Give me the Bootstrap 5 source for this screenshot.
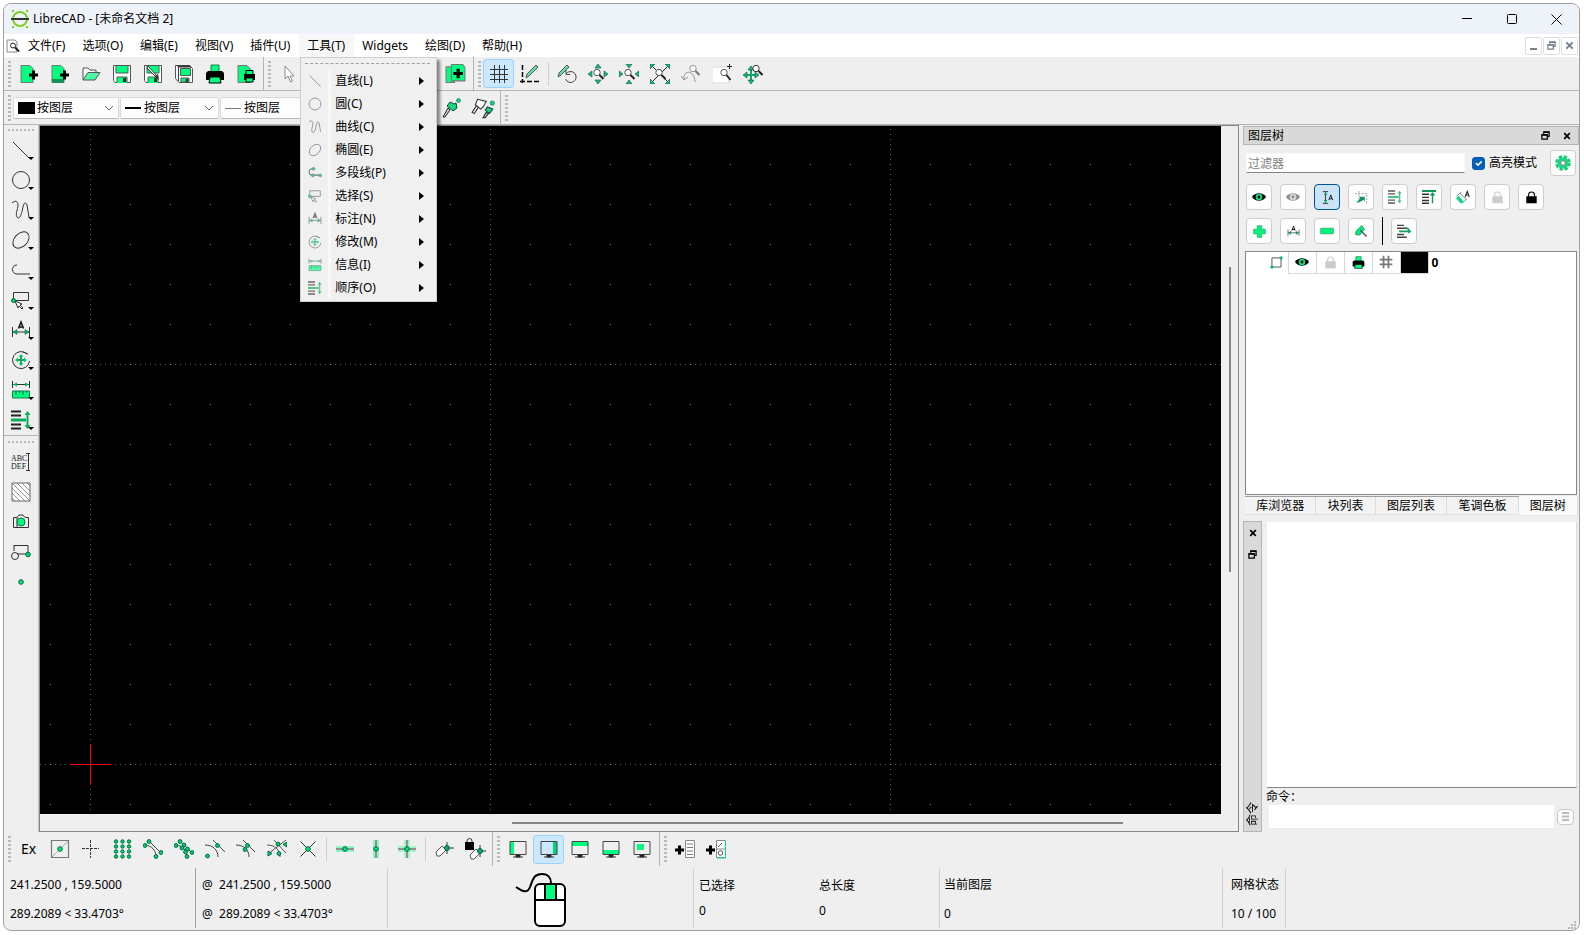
<!DOCTYPE html>
<html lang="zh-CN">
<head>
<meta charset="utf-8">
<meta name="viewport" content="width=device-width, initial-scale=1">
<title>LibreCAD - [未命名文档 2]</title>
<link rel="stylesheet" href="https://cdn.jsdelivr.net/npm/bootstrap@5.3.0/dist/css/bootstrap.min.css">
<script src="https://cdn.jsdelivr.net/npm/bootstrap@5.3.0/dist/js/bootstrap.bundle.min.js"></script>
<style>
  :root { --face: #efefef; --line: #b4b4b4; --frame: #828790; --go: #00ff7f; }
  body { font: 12px/16px "Noto Sans", "Noto Sans CJK SC", sans-serif; color: #000; background: #fff; padding: 3px 4px 4px 3px; }
  svg { display: block; flex: none; }
  button { color: inherit; }
  .app-window { background: var(--face); border: 1px solid #a0a0a0; border-radius: 8px; overflow: hidden; }
  .title-strip { background: #eef3fa; height: 30px; padding-left: 7px; }
  .caption-btn { width: 45px; height: 30px; }
  .plain-btn { border: 0; background: none; padding: 0; display: flex; align-items: center; justify-content: center; }
  .menu-strip { background: #fff; height: 23px; padding-left: 2px; }
  .menu-strip .nav-link { color: #000; padding: 4px 9px 3px 8px; line-height: 16px; }
  .menu-strip .nav-link.open { background: #f7f7f7; }
  .mdi-group { gap: 1px; margin-right: 1px; color: #75808c; }
  .mdi-btn { width: 17px; height: 18px; border: 1px solid #dedede; border-radius: 2px; background: #fff; }

  .tool-row { height: 34px; border-bottom: 1px solid var(--line); }
  .tool-group { display: flex; align-items: center; padding: 0 2px 0 4px; border-right: 1px solid var(--line); }
  .tool-group.last { border-right: 0; }
  .grip { width: 3px; height: 26px; margin-right: 2px; background: linear-gradient(#b8b8b8, #b8b8b8) 0 0 / 2px 4px; 
          -webkit-mask: repeating-linear-gradient(#000 0 2px, transparent 2px 4px); mask: repeating-linear-gradient(#000 0 2px, transparent 2px 4px); }
  .grip-h { width: 27px; height: 2px; -webkit-mask: repeating-linear-gradient(90deg, #000 0 2px, transparent 2px 4px); mask: repeating-linear-gradient(90deg, #000 0 2px, transparent 2px 4px); background: #b8b8b8; }
  .tool-btn { width: 31px; height: 29px; border: 1px solid transparent; border-radius: 3px; background: none; padding: 0; display: flex; align-items: center; justify-content: center; flex: none; }
  .tool-btn.on { background: #cce8ff; border-color: #99d1ff; }
  .tool-btn:hover { background: #e0f0fc; }
  .tool-gap { width: 6px; height: 24px; background: linear-gradient(#cfcfcf, #cfcfcf) 3px 0 / 1px 100% no-repeat; flex: none; }
  .select-group { width: 210px; }
  .pen-group { width: 497px; }
  .pen-combo { display: flex; align-items: center; height: 22px; margin-right: 1px; padding: 0 4px; border: 1px solid #d8d8d8; border-bottom-color: #b8b8b8; border-radius: 2px; background: #fdfdfd; width: 99px; }
  .pen-combo.wide { width: 106px; }
  .pen-combo select { appearance: none; border: 0; background: none; padding: 0 0 0 2px; flex: 1; min-width: 0; font: inherit; color: inherit; }
  .ex-label { font-size: 14px; }

  .tools-menu { position: absolute; top: 23px; left: 1px; width: 137px; min-width: 0; padding: 5px 2px 2px 4px; font-size: 12px; background: #f0f0f0; border: 1px solid #fff; outline: 1px solid #cfcfcf; outline-offset: -1px; border-radius: 0; box-shadow: 3px 3px 3px #0007; }
  .tear-line { border-top: 1px dashed #a0a0a0; margin: 0 4px 5px 0; }
  .tools-menu .dropdown-item { display: flex; align-items: center; height: 23px; padding: 0 10px 0 3px; color: #000; }
  .menu-label { border-left: 3px solid #f8f8f8; margin-left: 6px; padding-left: 4px; flex: 1; line-height: 23px; }
  .menu-icon { opacity: .65; }

  .side-bar { width: 35px; border-right: 1px solid #c4c4c4; }
  .side-bar .tool-btn { height: 30px; width: 34px; position: relative; }
  .side-bar .arrow::after { content: ""; position: absolute; right: 3px; bottom: 4px; border: 3px solid transparent; border-top-color: #000; border-bottom: 0; }
  .side-line { width: 100%; border-top: 1px solid var(--line); margin: 0 0 5px; }
  .view-frame { border: 1px solid var(--frame); min-width: 0; }
  .drawing { background: #000; min-width: 0; min-height: 0; position: relative; overflow: hidden; }
  .drawing svg { position: absolute; inset: 0; }
  .v-scroll { width: 17px; padding: 141px 0 242px; }
  .v-scroll div { width: 2px; height: 100%; background: #868686; margin-left: 8px; }
  .h-scroll { height: 17px; padding: 8px 0 0; }
  .h-scroll div { height: 2px; background: #868686; margin-left: 39.4%; width: 51%; }

  .dock-col { width: 336px; margin-left: 4px; padding-top: 1px; }
  .dock-title { height: 19px; background: #d9d9d9; border: 1px solid #b5b5b5; padding: 0 7px 0 4px; line-height: 17px; }
  .dock-title .gap-btn { margin-left: 13px; }
  .dock-tools { padding: 5px 3px 6px; }
  .filter-box { width: 219px; height: 20px; border: 1px solid #f8f8f8; border-bottom: 1px solid #868686; padding: 0 1px; background: #fff; }
  .filter-box::placeholder { color: #808080; }
  .mode-check { width: 13px; height: 13px; margin: 0 4px 0 7px; border-radius: 3px; }
  .mode-check:checked { background-color: #005fb8; border-color: #005fb8; }
  .layer-btn { width: 26px; height: 26px; border: 1px solid #cdcdcd; border-radius: 4px; background: #fdfdfd; padding: 0; display: flex; align-items: center; justify-content: center; }
  .layer-btn.on { background: #cce4f7; border-color: #005499; }
  .button-row { gap: 8px; margin-top: 8px; }
  .button-row.lined { margin-top: 7px; }
  .button-line { width: 1px; height: 28px; background: #000; }
  .off { color: #ccc; }
  .layer-list { height: 244px; margin: 0 2px; background: #fff; border: 1px solid var(--frame); }
  .layer-list table { margin-left: 24px; border-collapse: collapse; }
  .layer-list td { padding: 0; height: 21px; width: 28px; border: 1px solid #d8d8d8; border-top: 0; }
  .layer-list td svg { margin: auto; }
  .layer-list td.bare { border-width: 0; padding-left: 3px; }
  .layer-list td.node { border-left: 0; border-bottom: 0; width: 18px; }
  .layer-list td.node svg { margin: 0; }
  .layer-list td.swatch { background: #000; }
  .dock-tabs { margin: 1px 1px 0 2px; border-top: 1px solid #a0a0a0; height: 20px; }
  .dock-tabs .nav-link { color: #000; background: #f3f3f3; border-right: 1px solid #dcdcdc; border-bottom: 1px solid #e2e2e2; border-radius: 0; height: 18px; padding: 0; line-height: 17px; text-align: center; flex: 1 1 auto; }
  .dock-tabs .nav-link.active { background: #fafafa; height: 20px; margin-top: -1px; line-height: 20px; }
  .command-dock { margin-top: 5px; }
  .command-rail { width: 19px; background: #d9d9d9; border: 1px solid #b5b5b5; padding: 7px 0 5px; gap: 13px; }
  .rail-text { writing-mode: vertical-rl; text-orientation: sideways; transform: rotate(180deg); line-height: 17px; }
  .command-log { margin: 1px 2px 0 5px; background: #fff; border: 0; border-right: 1px solid #dcdcdc; border-bottom: 1px solid #868686; resize: none; min-height: 60px; }
  .command-label { margin-left: 4px; line-height: 17px; }
  .command-input { height: 23px; border: 0; background: #fff; margin-left: 7px; min-width: 0; }
  .command-menu { width: 17px; height: 16px; border: 1px solid #c8c8c8; border-radius: 4px; background: #fdfdfd; margin: 0 5px 0 3px; }

  .bottom-row { height: 34px; }
  .status-strip { height: 64px; }
  .status-cell { margin: 2px 0; padding: 2px 6px; border-right: 1px solid #d0d0d0; line-height: 29px; white-space: pre; }
  .status-cell.dark { border-right-color: #a0a0a0; }
  .status-cell.tight { line-height: 25px; padding-top: 5px; padding-left: 5px; }
  .w-coord { width: 192px; } .w-mouse { width: 306px; } .w-sel { width: 246px; }
  .w-layer { width: 283px; padding-left: 4px; } .w-grid { width: 63px; padding-left: 8px; padding-right: 0; }
  .w-half { width: 120px; }
</style>
</head>
<body class="vh-100 overflow-hidden">

<svg width="0" height="0" class="position-absolute" aria-hidden="true">
  <defs>
    <symbol id="i-new" viewBox="0 0 20 20"><path d="M2 1.500h9l3 3v14H2z" fill="#00ff7f" stroke="#777"/><path d="M10 11h9M14.500 6.500v9" stroke="#000" stroke-width="3"/></symbol>
    <symbol id="i-newt" viewBox="0 0 20 20"><path d="M2 1.500h9l3 3v14H2z" fill="#00ff7f" stroke="#777"/><path d="M2 15h12v4H2z" fill="#16905a"/><path d="M10 11h9M14.500 6.500v9" stroke="#000" stroke-width="3"/></symbol>
    <symbol id="i-open" viewBox="0 0 20 20"><path d="M2 16V4h5l2 2h6v3" fill="#f4f4f4" stroke="#555"/><path d="M2 16 7 8.500h12L14 16z" fill="#4dfba4" stroke="#555"/></symbol>
    <symbol id="i-save" viewBox="0 0 20 20"><path d="M1.500 1.500h17v17H3l-1.500-2z" fill="#fff" stroke="#555"/><path d="M4 2h12v7H4zM5 13h10v6H5z" fill="#00ff7f"/><path d="M4 2v7h12V2M5 18v-5h10v5" fill="none" stroke="#555"/><path d="M11 14h3v4h-3z" fill="#333"/></symbol>
    <symbol id="i-saveas" viewBox="0 0 20 20"><use href="#i-save"/><path d="M5 2 15 13l-1 1L4 4z" fill="#fff" stroke="#333"/><path d="m12 12 4 4-1-6z" fill="#333"/></symbol>
    <symbol id="i-saveall" viewBox="0 0 20 20"><path d="M1.500 1.500h14l3 3v14H5l-3.500-4z" fill="#fff" stroke="#555"/><path d="M2 1.500h14l2 2H5z" fill="#333"/><path d="M6.500 4.500h10v7h-10zM7 14h8v4H7z" fill="#00ff7f" stroke="#555"/><path d="M4.500 3v14M12 15h2v3h-2z" stroke="#444" fill="#333"/></symbol>
    <symbol id="i-print" viewBox="0 0 20 20"><path d="M6 1h8v8H6z" fill="#00ff7f" stroke="#14804e"/><path d="M3 7h14l2 2v7H1V9z" fill="#000"/><path d="M5 13h10l1 6H4z" fill="#00ff7f" stroke="#000"/></symbol>
    <symbol id="i-preview" viewBox="0 0 20 20"><path d="M2 1.500h9l3 3v14H2z" fill="#00ff7f" stroke="#777"/><path d="M8 10h11v6H8z" fill="#000"/><path d="M10 6.500h7v4h-7zM10 14h7v4h-7z" fill="#00ff7f" stroke="#000"/></symbol>
    <symbol id="i-cursor" viewBox="0 0 20 20"><path d="M6 2v13l3-3 2.500 6 2-1-2.500-5h4z" fill="#fff" stroke="#888"/></symbol>
    <symbol id="i-paste" viewBox="0 0 20 20"><path d="M1 3.500h8v15H1z" fill="#00ff7f" stroke="#777"/><path d="M9 1.500h8l2 3V17H6V1.500z" fill="#00ff7f" stroke="#777"/><path d="M8 10h9M12.500 5.500v9" stroke="#000" stroke-width="3"/></symbol>
    <symbol id="i-grid" viewBox="0 0 20 20"><path d="M5.500 1v18M10.500 1v18M15.500 1v18M1 5.500h18M1 10.500h18M1 15.500h18" stroke="#333"/></symbol>
    <symbol id="i-draft" viewBox="0 0 20 20"><path d="M2.500 1v18M0 17.500h20" stroke="#000" stroke-width="1.500" stroke-dasharray="5 2"/><path d="m6 14 1-4 9-9 2 2-9 9z" fill="#5fe0a0" stroke="#555"/></symbol>
    <symbol id="i-redraw" viewBox="0 0 20 20"><path d="m1 13 1-4L10 1l2 2-8 8z" fill="#5fe0a0" stroke="#555"/><path d="M9 10a5.500 5.500 0 1 1-.5 5M9 6v4.500h4" fill="none" stroke="#444"/></symbol>
    <symbol id="i-mag" viewBox="0 0 20 20"><circle cx="9" cy="8.500" r="3.200" fill="#fff" stroke="#555"/><path d="m11.500 11 4 4" stroke="#222" stroke-width="2"/></symbol>
    <symbol id="i-zin" viewBox="0 0 20 20"><use href="#i-mag"/><path d="m10 0 3 4H7zM10 20l3-4H7zM0 10l4-3v6zM20 10l-4-3v6z" fill="#12c46c" stroke="#144" stroke-width=".6"/></symbol>
    <symbol id="i-zout" viewBox="0 0 20 20"><use href="#i-mag"/><path d="m10 4 3-4H7zM10 16l3 4H7zM4 10 0 7v6zM16 10l4-3v6z" fill="#12c46c" stroke="#144" stroke-width=".6"/></symbol>
    <symbol id="i-zauto" viewBox="0 0 20 20"><path d="m1 1 18 18M19 1 1 19" stroke="#222"/><use href="#i-mag"/><path d="M0 0h5L0 5zM20 0h-5l5 5zM0 20h5l-5-5zM20 20h-5l5-5z" fill="#12c46c" stroke="#144" stroke-width=".6"/></symbol>
    <symbol id="i-zprev" viewBox="0 0 20 20"><g opacity=".6"><path d="M3 15c-1-10 11-9 11 3M0 12l3 4 4-3" fill="none" stroke="#555"/><circle cx="12" cy="4.500" r="3.200" fill="#fff" stroke="#555"/><path d="m14.500 7 4 4" stroke="#222" stroke-width="2"/></g></symbol>
    <symbol id="i-zwin" viewBox="0 0 20 20"><path d="M0 3h17v16H0z" fill="#fff" stroke="#ddd"/><circle cx="12" cy="8.500" r="3.200" fill="#fff" stroke="#555"/><path d="m14.500 11 4 5" stroke="#222" stroke-width="2"/><path d="M15 2.500h5M17.500 0v5" stroke="#222"/></symbol>
    <symbol id="i-zpan" viewBox="0 0 20 20"><path d="M8 4v14M1 11h14" stroke="#12a860" stroke-width="2"/><path d="m8 2 3 4H5zM8 20l3-4H5zM0 11l4-3v6zM16 11l-4-3v6z" fill="#12c46c" stroke="#144" stroke-width=".6"/><circle cx="13" cy="4.500" r="3.200" fill="#fff" stroke="#333"/><path d="m15.500 7 4 4" stroke="#222" stroke-width="2"/></symbol>
    <symbol id="i-brush" viewBox="0 0 20 20"><path d="m1 19 5-9 2 2-5 7z" fill="#ccc" stroke="#222"/><path d="m5 8 3-4 4 2 2-1 1 5-4 3z" fill="#12d878" stroke="#144"/><circle cx="16.500" cy="2.500" r="2" fill="#12d878" stroke="#144" stroke-width=".5"/></symbol>
    <symbol id="i-brush2" viewBox="0 0 22 20"><path d="m1 14 4-6 2 1-4 6z" fill="#fff" stroke="#333"/><path d="m4 7 2-5 8 2-3 5-2 2z" fill="#fff" stroke="#333"/><path d="m11 19 3-5 2 1-3 4z" fill="#ccc" stroke="#222"/><path d="m13 12 2-3 5 2-3 4z" fill="#12d878" stroke="#144"/><circle cx="19.500" cy="5.500" r="2" fill="#12d878" stroke="#144" stroke-width=".5"/></symbol>
    <symbol id="i-line" viewBox="0 0 20 20"><path d="m2 2 16 16" stroke="#333"/></symbol>
    <symbol id="i-circle" viewBox="0 0 20 20"><circle cx="10" cy="10" r="8.500" fill="none" stroke="#333"/></symbol>
    <symbol id="i-curve" viewBox="0 0 20 20"><path d="M1 3c3-3 6-2 6 2 0 5-3 8-1 12 3 4 5-5 6-10s3-5 4-2c1 4 1 8 2 12" fill="none" stroke="#333"/></symbol>
    <symbol id="i-ellipse" viewBox="0 0 20 20"><ellipse cx="10" cy="10" rx="9.500" ry="6.500" transform="rotate(-45 10 10)" fill="none" stroke="#333"/></symbol>
    <symbol id="i-poly" viewBox="0 0 20 20"><path d="M6 5C0 5 0 14 6 14h13" fill="none" stroke="#333"/></symbol>
    <symbol id="i-polym" viewBox="0 0 20 20"><path d="M7 4C0 4 0 13 6 13h12" fill="none" stroke="#333" stroke-width="1.500"/><g fill="#00b860" stroke="#064"><circle cx="8" cy="4" r="2"/><circle cx="7" cy="13.500" r="2"/><circle cx="17.500" cy="13.500" r="2"/></g></symbol>
    <symbol id="i-select" viewBox="0 0 20 20"><path d="M2.500 2.500h15v8h-15z" fill="none" stroke="#333"/><path d="m4 11 3 7 1-2 3 3 1-1-3-3 2-1z" fill="#fff" stroke="#333"/><circle cx="2.500" cy="10.500" r="2" fill="#00d86c" stroke="#064"/></symbol>
    <symbol id="i-dim" viewBox="0 0 20 20"><path d="M1.500 7v10M18.500 7v10M2 12h16" stroke="#333"/><path d="m2 12 4-2.500v5zM18 12l-4-2.500v5z" fill="#00b860" stroke="#064" stroke-width=".5"/><path d="M7.500 8.500 10 2l2.500 6.500M8 7h4" fill="none" stroke="#111" stroke-width="1.500"/></symbol>
    <symbol id="i-modify" viewBox="0 0 20 20"><path d="M16 4a8.500 8.500 0 1 0 2.500 7M12 2l5 2" fill="none" stroke="#333"/><path d="M10 5v10M5 10h10" stroke="#12a860" stroke-width="2"/><path d="m10 4 2.500 3h-5zM10 16l2.500-3h-5zM4 10l3-2.500v5zM16 10l-3-2.500v5z" fill="#12c46c"/></symbol>
    <symbol id="i-info" viewBox="0 0 20 20"><path d="M1.500 1v7M18.500 1v7M2 4.500h16" stroke="#333"/><path d="m2 4.500 4-2v4zM18 4.500l-4-2v4z" fill="#00b860"/><path d="M1.500 11h17v7h-17z" fill="#00ff7f" stroke="#16804e"/><path d="M5 11v4M8.500 11v2M12 11v4M15.500 11v2" stroke="#064"/></symbol>
    <symbol id="i-order" viewBox="0 0 20 20"><path d="M0 1.500h10M0 5.500h10M0 14.500h10M0 18.500h10" stroke="#222" stroke-width="2"/><path d="M0 10h15" stroke="#0cab5e" stroke-width="3"/><path d="M16.500 3v14" stroke="#0cab5e" stroke-width="2"/><path d="m16.500 1 3 4h-6zM16.500 19l3-4h-6z" fill="#0cab5e"/></symbol>
    <symbol id="i-hatch" viewBox="0 0 20 20"><path d="M1 1h18v18H1z" fill="#fff" stroke="#666"/><path d="M1 1l18 18M6 1l13 13M11 1l8 8M16 1l3 3M1 6l13 13M1 11l8 8M1 16l3 3" stroke="#777" stroke-width=".8"/></symbol>
    <symbol id="i-image" viewBox="0 0 20 20"><path d="M2.500 5.500H6L8 3h4l2 2.500h3.500v10h-15zM6 5v10" fill="none" stroke="#333"/><circle cx="10" cy="10" r="4" fill="#00ff7f" stroke="#087848"/></symbol>
    <symbol id="i-block" viewBox="0 0 20 20"><path d="M3 3.500h14V12H6" fill="none" stroke="#333"/><path d="M3 3v6" stroke="#333"/><circle cx="4" cy="14" r="3.500" fill="none" stroke="#333"/><circle cx="17" cy="12.500" r="2.300" fill="#00d86c" stroke="#064"/></symbol>
    <symbol id="i-dot" viewBox="0 0 20 20"><circle cx="10" cy="10" r="2.300" fill="#00e878" stroke="#064"/></symbol>
    <symbol id="i-free" viewBox="0 0 20 20"><path d="M1.500 1.500h17v17h-17z" fill="none" stroke="#777" stroke-width="1.200"/><path d="M2 18 18 2" stroke="#aaa"/><use href="#i-dot"/></symbol>
    <symbol id="i-snapgrid" viewBox="0 0 20 20"><path d="M9.500 1v18M1 9.500h17" stroke="#333" stroke-dasharray="3 1"/></symbol>
    <symbol id="i-nodes" viewBox="0 0 20 20"><g fill="#00d86c" stroke="#064"><circle cx="4" cy="2.500" r="1.700"/><circle cx="10.500" cy="2.500" r="1.700"/><circle cx="17" cy="2.500" r="1.700"/><circle cx="4" cy="7.500" r="1.700"/><circle cx="10.500" cy="7.500" r="1.700"/><circle cx="17" cy="7.500" r="1.700"/><circle cx="4" cy="12.500" r="1.700"/><circle cx="10.500" cy="12.500" r="1.700"/><circle cx="17" cy="12.500" r="1.700"/><circle cx="4" cy="17.500" r="1.700"/><circle cx="10.500" cy="17.500" r="1.700"/><circle cx="17" cy="17.500" r="1.700"/></g></symbol>
    <symbol id="i-end" viewBox="0 0 20 20"><path d="M6 2 18 14M2 6c7 1 11 5 11 12" fill="none" stroke="#444"/><g fill="#00d86c" stroke="#064"><circle cx="6" cy="2.500" r="1.900"/><circle cx="2" cy="6.500" r="1.900"/><circle cx="18" cy="13.500" r="1.900"/><circle cx="13" cy="17.500" r="1.900"/></g></symbol>
    <symbol id="i-onent" viewBox="0 0 20 20"><use href="#i-end"/><g fill="#00d86c" stroke="#064"><circle cx="10" cy="6" r="1.900"/><circle cx="13.500" cy="10" r="1.900"/><circle cx="8" cy="9" r="1.900"/><circle cx="11.500" cy="13" r="1.900"/></g></symbol>
    <symbol id="i-center" viewBox="0 0 20 20"><path d="m8 1 12 12M0 6c8 0 13 5 13 12" fill="none" stroke="#444"/><circle cx="12.500" cy="6.500" r="1.900" fill="#00d86c" stroke="#064"/><circle cx="2.500" cy="17" r="1.900" fill="#00d86c" stroke="#064"/></symbol>
    <symbol id="i-mid" viewBox="0 0 20 20"><path d="m7 1 12 12M0 6c8 0 13 5 13 12" fill="none" stroke="#444"/><circle cx="11.500" cy="6.500" r="1.900" fill="#00d86c" stroke="#064"/><circle cx="9" cy="10.500" r="1.900" fill="#00d86c" stroke="#064"/></symbol>
    <symbol id="i-dist" viewBox="0 0 20 20"><path d="m7 1 12 13M0 6c8 0 13 5 13 12M19 1 1 15" fill="none" stroke="#555"/><path d="m20 3-4 2.500L20 8zM1 12l4 2.500L1 17z" fill="#00d86c" stroke="#064"/><circle cx="11" cy="5" r="1.900" fill="#00d86c" stroke="#064"/><circle cx="12" cy="14.500" r="1.900" fill="#00d86c" stroke="#064"/></symbol>
    <symbol id="i-cross" viewBox="0 0 20 20"><path d="m2.500 2.500 15 15M17.500 2.500l-15 15" stroke="#333"/><use href="#i-dot"/></symbol>
    <symbol id="i-hor" viewBox="0 0 20 20"><path d="M1 8h18M1 12h18" stroke="#8df5bf" stroke-width="2"/><path d="M1 10h18" stroke="#333"/><use href="#i-dot"/></symbol>
    <symbol id="i-ver" viewBox="0 0 20 20"><path d="M8 1v18M12 1v18" stroke="#8df5bf" stroke-width="2"/><path d="M10 1v18" stroke="#333"/><use href="#i-dot"/></symbol>
    <symbol id="i-ortho" viewBox="0 0 20 20"><path d="M8 1v18M12 1v18M1 8h18M1 12h18" stroke="#8df5bf" stroke-width="1.500"/><path d="M10 1v18M1 10h18" stroke="#333"/><use href="#i-dot"/></symbol>
    <symbol id="i-relz" viewBox="0 0 20 20"><path d="M13 3v12M7 9h13" stroke="#333"/><path d="m2 13 6-6 4 4-6 6-3 0z" fill="#fff" stroke="#555"/><circle cx="13" cy="9" r="2.500" fill="#16a862" stroke="#064"/></symbol>
    <symbol id="i-lockz" viewBox="0 0 22 22"><path d="M3 6V3a2.500 2.500 0 0 1 5 0v3" fill="none" stroke="#333"/><path d="M1 4h9v8H1z" fill="#000"/><path d="M16 7v12M10 13h12" stroke="#333"/><path d="m6 17 6-6 4 4-6 6h-3z" fill="#fff" stroke="#555"/><circle cx="16" cy="13" r="2.500" fill="#16a862" stroke="#064"/></symbol>
    <symbol id="i-screen" viewBox="0 0 20 20"><path d="M2 2.500h16v13H2z" fill="none" stroke="#444"/><path d="M8 16h4v2H8zM5 18h10" stroke="#333" fill="#000"/></symbol>
    <symbol id="i-dl" viewBox="0 0 20 20"><path d="M2 3h4v12H2z" fill="#00ff7f"/><use href="#i-screen"/></symbol>
    <symbol id="i-dr" viewBox="0 0 20 20"><path d="M14 3h4v12h-4z" fill="#00d878"/><use href="#i-screen"/></symbol>
    <symbol id="i-dt" viewBox="0 0 20 20"><path d="M2 3h16v4H2z" fill="#00ff7f"/><use href="#i-screen"/></symbol>
    <symbol id="i-db" viewBox="0 0 20 20"><path d="M2 11h16v4H2z" fill="#00ff7f"/><use href="#i-screen"/></symbol>
    <symbol id="i-df" viewBox="0 0 20 20"><path d="M5 5h7v6H5z" fill="#00ff7f"/><use href="#i-screen"/></symbol>
    <symbol id="i-addmenu" viewBox="0 0 20 20"><path d="M0 11h9M4.500 6.500v9" stroke="#000" stroke-width="3"/><path d="M10.500 1.500h9v17h-9z" fill="#fff" stroke="#888"/><path d="M12 5h6M12 8.500h6M12 12h6M12 15.500h6" stroke="#777"/></symbol>
    <symbol id="i-addtool" viewBox="0 0 20 20"><path d="M0 11h9M4.500 6.500v9" stroke="#000" stroke-width="3"/><path d="M10.500 1.500h9v17h-9zM10 10h9" fill="#fff" stroke="#888"/><path d="m12 8 4-4" stroke="#555"/><path d="M19.500 2v17H11" fill="none" stroke="#0d8"/><circle cx="14.500" cy="14" r="2.300" fill="none" stroke="#555"/></symbol>
    <symbol id="i-eye" viewBox="0 0 20 20"><path d="M0 10c4-7 16-7 20 0-4 7-16 7-20 0z" fill="#000"/><circle cx="10" cy="10" r="4.800" fill="#18d880"/><circle cx="10" cy="10" r="2" fill="#000"/></symbol>
    <symbol id="i-lock" viewBox="0 0 20 20"><path d="M5.500 9V6a4.500 4.500 0 0 1 9 0v3" fill="none" stroke="currentColor" stroke-width="1.600"/><path d="M2 8h16v11H2z" fill="currentColor"/></symbol>
    <symbol id="i-plus" viewBox="0 0 20 20"><path d="M6.500 1h7v5.500H19v7h-5.500V19h-7v-5.500H1v-7h5.500z" fill="#00f57b" stroke="#2b9b68"/></symbol>
    <symbol id="i-minus" viewBox="0 0 20 20"><path d="M1 6h18v8H1z" fill="#00f57b" stroke="#2b9b68"/></symbol>
    <symbol id="i-rename" viewBox="0 0 20 20"><path d="m11 2 4 6-7 8-6-1 1-5z" fill="#00e878" stroke="#287"/><path d="m9 9 9 9" stroke="#555" stroke-width="2"/></symbol>
    <symbol id="i-vdim" viewBox="0 0 20 20"><path d="M3 1h8M3 19h8M7 2v16" stroke="#333" stroke-width="1.500"/><path d="m7 2 3 4H4zM7 18l3-4H4z" fill="#0a6"/><path d="m12 14 3-8 3 8M13 12h4" fill="none" stroke="#222" stroke-width="1.500"/></symbol>
    <symbol id="i-pick" viewBox="0 0 20 20"><path d="M0 4h18v15M6 0v18" fill="none" stroke="#777" stroke-dasharray="3 2"/><path d="M15 9v7l-2-2-6 3-5 1 6-7-2-2z" fill="#0a9c5c"/></symbol>
    <symbol id="i-top" viewBox="0 0 20 20"><path d="M0 6h10M0 10.500h10M0 15h10M0 19h10" stroke="#333" stroke-width="2"/><path d="M0 1.500h20" stroke="#0a9858" stroke-width="3"/><path d="M15 5v14" stroke="#0a9858" stroke-width="2"/><path d="m15 3 4 5h-8z" fill="#0a9858"/></symbol>
    <symbol id="i-slant" viewBox="0 0 20 20"><path d="m2 10 7 8" stroke="#12d880" stroke-width="5"/><path d="m7 3-6 6M15 13l-6 6" stroke="#178"/><path d="m6 5 9 9" stroke="#555"/><path d="m13 10 3-8 3 8M14 7h4" fill="none" stroke="#222" stroke-width="1.500"/></symbol>
    <symbol id="i-export" viewBox="0 0 20 20"><path d="M0 2h10M0 6h14M0 15h10M0 19h14" stroke="#444" stroke-width="2"/><path d="M3 10.500h17M13 6c4 0 4 2 4 7" fill="none" stroke="#14a060" stroke-width="2.500"/></symbol>
    <symbol id="i-gear" viewBox="0 0 20 20"><circle cx="10" cy="10" r="8" fill="none" stroke="#18c878" stroke-width="3.500" stroke-dasharray="4 2.280"/><circle cx="10" cy="10" r="5.300" fill="none" stroke="#18d880" stroke-width="4"/><circle cx="10" cy="10" r="3" fill="#fff" stroke="#355"/></symbol>
    <symbol id="i-hash" viewBox="0 0 20 20"><path d="M6.500 1v18M13.500 1v18M1 6.500h18M1 13.500h18" stroke="#777" stroke-width="2.500"/></symbol>
    <symbol id="i-node" viewBox="0 0 20 20"><path d="M3 3h14v14H3z" fill="none" stroke="#555" stroke-width="1.500"/><circle cx="17" cy="3" r="2.500" fill="#0b7"/><circle cx="3" cy="17" r="2.500" fill="#0b7"/></symbol>
    <symbol id="i-float" viewBox="0 0 10 10"><path d="M3 3V1h6v5H7M1 4h6v5H1z" fill="none" stroke="currentColor" stroke-width="1.400"/><path d="M3 1.500h6M1 4.500h6" stroke="currentColor" stroke-width="1.500"/></symbol>
    <symbol id="i-x" viewBox="0 0 10 10"><path d="m1.500 1.500 7 7M8.500 1.500l-7 7" stroke="currentColor" stroke-width="2.200"/></symbol>
    <symbol id="i-down" viewBox="0 0 10 10"><path d="m1 3 4 4 4-4" fill="none" stroke="#666"/></symbol>
  </defs>
</svg>

<div class="app-window d-flex flex-column h-100">
  <header class="title-strip d-flex align-items-center">
    <svg width="18" height="18" viewBox="0 0 18 18" class="me-1"><path d="M1 1h2M15 1h2M1 17h2M15 17h2" stroke="#80cc28" stroke-width="2"/><circle cx="9" cy="9" r="7" fill="none" stroke="#80cc28" stroke-width="2"/><path d="M0 9h18" stroke="#333" stroke-width="2"/></svg>
    <span>LibreCAD - [未命名文档 2]</span>
    <div class="ms-auto d-flex">
      <button class="plain-btn caption-btn" aria-label="最小化"><svg width="10" height="10"><path d="M0 4.500h10" stroke="#000"/></svg></button>
      <button class="plain-btn caption-btn" aria-label="最大化"><svg width="10" height="10"><rect x=".5" y=".5" width="9" height="9" rx="1" fill="none" stroke="#000"/></svg></button>
      <button class="plain-btn caption-btn" aria-label="关闭"><svg width="11" height="11"><path d="m.5.5 10 10M10.500.5l-10 10" stroke="#000"/></svg></button>
    </div>
  </header>

  <nav class="menu-strip d-flex align-items-center">
    <svg width="14" height="14" viewBox="0 0 14 14"><path d="M1 1h8l2 2v10H1z" fill="#fff" stroke="#888"/><circle cx="7" cy="6.500" r="2.500" fill="#fff" stroke="#222"/><path d="m9 8.500 4 4" stroke="#222" stroke-width="2"/></svg>
    <ul class="nav flex-nowrap">
      <li class="nav-item"><a class="nav-link" href="#">文件(F)</a></li>
      <li class="nav-item"><a class="nav-link" href="#">选项(O)</a></li>
      <li class="nav-item"><a class="nav-link" href="#">编辑(E)</a></li>
      <li class="nav-item"><a class="nav-link" href="#">视图(V)</a></li>
      <li class="nav-item"><a class="nav-link" href="#">插件(U)</a></li>
      <li class="nav-item position-relative"><a class="nav-link open" href="#">工具(T)</a>
        <div class="dropdown-menu show tools-menu">
          <div class="tear-line"></div>
          <a class="dropdown-item" href="#"><svg class="menu-icon" width="14" height="14"><use href="#i-line"/></svg><span class="menu-label">直线(L)</span><svg width="5" height="8"><path d="m0 0 5 4-5 4z"/></svg></a>
          <a class="dropdown-item" href="#"><svg class="menu-icon" width="14" height="14"><use href="#i-circle"/></svg><span class="menu-label">圆(C)</span><svg width="5" height="8"><path d="m0 0 5 4-5 4z"/></svg></a>
          <a class="dropdown-item" href="#"><svg class="menu-icon" width="14" height="14"><use href="#i-curve"/></svg><span class="menu-label">曲线(C)</span><svg width="5" height="8"><path d="m0 0 5 4-5 4z"/></svg></a>
          <a class="dropdown-item" href="#"><svg class="menu-icon" width="14" height="14"><use href="#i-ellipse"/></svg><span class="menu-label">椭圆(E)</span><svg width="5" height="8"><path d="m0 0 5 4-5 4z"/></svg></a>
          <a class="dropdown-item" href="#"><svg class="menu-icon" width="14" height="14"><use href="#i-polym"/></svg><span class="menu-label">多段线(P)</span><svg width="5" height="8"><path d="m0 0 5 4-5 4z"/></svg></a>
          <a class="dropdown-item" href="#"><svg class="menu-icon" width="14" height="14"><use href="#i-select"/></svg><span class="menu-label">选择(S)</span><svg width="5" height="8"><path d="m0 0 5 4-5 4z"/></svg></a>
          <a class="dropdown-item" href="#"><svg class="menu-icon" width="14" height="14"><use href="#i-dim"/></svg><span class="menu-label">标注(N)</span><svg width="5" height="8"><path d="m0 0 5 4-5 4z"/></svg></a>
          <a class="dropdown-item" href="#"><svg class="menu-icon" width="14" height="14"><use href="#i-modify"/></svg><span class="menu-label">修改(M)</span><svg width="5" height="8"><path d="m0 0 5 4-5 4z"/></svg></a>
          <a class="dropdown-item" href="#"><svg class="menu-icon" width="14" height="14"><use href="#i-info"/></svg><span class="menu-label">信息(I)</span><svg width="5" height="8"><path d="m0 0 5 4-5 4z"/></svg></a>
          <a class="dropdown-item" href="#"><svg class="menu-icon" width="14" height="14"><use href="#i-order"/></svg><span class="menu-label">顺序(O)</span><svg width="5" height="8"><path d="m0 0 5 4-5 4z"/></svg></a>
        </div>
      </li>
      <li class="nav-item"><a class="nav-link" href="#">Widgets</a></li>
      <li class="nav-item"><a class="nav-link" href="#">绘图(D)</a></li>
      <li class="nav-item"><a class="nav-link" href="#">帮助(H)</a></li>
    </ul>
    <div class="ms-auto d-flex mdi-group">
      <button class="plain-btn mdi-btn" aria-label="最小化文档"><svg width="7" height="9"><path d="M0 8h7" stroke="currentColor" stroke-width="2"/></svg></button>
      <button class="plain-btn mdi-btn" aria-label="还原文档"><svg width="9" height="9"><use href="#i-float"/></svg></button>
      <button class="plain-btn mdi-btn" aria-label="关闭文档"><svg width="9" height="9"><use href="#i-x"/></svg></button>
    </div>
  </nav>

  <div class="tool-row d-flex">
    <div class="tool-group">
      <div class="grip"></div>
      <button class="tool-btn" aria-label="新建"><svg width="20" height="20"><use href="#i-new"/></svg></button>
      <button class="tool-btn" aria-label="从模板新建"><svg width="20" height="20"><use href="#i-newt"/></svg></button>
      <button class="tool-btn" aria-label="打开"><svg width="20" height="20"><use href="#i-open"/></svg></button>
      <button class="tool-btn" aria-label="保存"><svg width="20" height="20"><use href="#i-save"/></svg></button>
      <button class="tool-btn" aria-label="另存为"><svg width="20" height="20"><use href="#i-saveas"/></svg></button>
      <button class="tool-btn" aria-label="全部保存"><svg width="20" height="20"><use href="#i-saveall"/></svg></button>
      <button class="tool-btn" aria-label="打印"><svg width="20" height="20"><use href="#i-print"/></svg></button>
      <button class="tool-btn" aria-label="打印预览"><svg width="20" height="20"><use href="#i-preview"/></svg></button>
    </div>
    <div class="tool-group select-group">
      <div class="grip"></div>
      <button class="tool-btn" aria-label="选择"><svg width="20" height="20"><use href="#i-cursor"/></svg></button>
      <button class="tool-btn ms-auto" aria-label="粘贴"><svg width="21" height="21"><use href="#i-paste"/></svg></button>
    </div>
    <div class="tool-group last">
      <div class="grip"></div>
      <button class="tool-btn on" aria-label="栅格"><svg width="20" height="20"><use href="#i-grid"/></svg></button>
      <button class="tool-btn" aria-label="草图模式"><svg width="20" height="20"><use href="#i-draft"/></svg></button>
      <div class="tool-gap"></div>
      <button class="tool-btn" aria-label="重绘"><svg width="20" height="20"><use href="#i-redraw"/></svg></button>
      <button class="tool-btn" aria-label="放大"><svg width="20" height="20"><use href="#i-zin"/></svg></button>
      <button class="tool-btn" aria-label="缩小"><svg width="20" height="20"><use href="#i-zout"/></svg></button>
      <button class="tool-btn" aria-label="自动缩放"><svg width="20" height="20"><use href="#i-zauto"/></svg></button>
      <button class="tool-btn" aria-label="上一视图"><svg width="20" height="20"><use href="#i-zprev"/></svg></button>
      <button class="tool-btn" aria-label="窗口缩放"><svg width="20" height="20"><use href="#i-zwin"/></svg></button>
      <button class="tool-btn" aria-label="平移"><svg width="20" height="20"><use href="#i-zpan"/></svg></button>
    </div>
  </div>

  <div class="tool-row d-flex">
    <div class="tool-group pen-group">
      <div class="grip"></div>
      <div class="pen-combo wide"><svg width="17" height="12"><rect width="17" height="12"/></svg><select aria-label="颜色"><option>按图层</option></select><svg width="10" height="10"><use href="#i-down"/></svg></div>
      <div class="pen-combo"><svg width="17" height="12"><path d="M0 6h16" stroke="#000" stroke-width="2"/></svg><select aria-label="线宽"><option>按图层</option></select><svg width="10" height="10"><use href="#i-down"/></svg></div>
      <div class="pen-combo"><svg width="17" height="12"><path d="M0 6.500h16" stroke="#777"/></svg><select aria-label="线型"><option>按图层</option></select><svg width="10" height="10"><use href="#i-down"/></svg></div>
      <button class="tool-btn ms-auto" aria-label="拾取画笔"><svg width="20" height="20"><use href="#i-brush"/></svg></button>
      <button class="tool-btn" aria-label="应用画笔"><svg width="24" height="22"><use href="#i-brush2"/></svg></button>
    </div>
    <div class="tool-group last"><div class="grip"></div></div>
  </div>

  <main class="d-flex flex-fill" style="min-height:0">
    <aside class="side-bar d-flex flex-column align-items-center">
      <div class="grip-h mt-1 mb-1"></div>
      <button class="tool-btn arrow" aria-label="直线"><svg width="20" height="20"><use href="#i-line"/></svg></button>
      <button class="tool-btn arrow" aria-label="圆"><svg width="20" height="20"><use href="#i-circle"/></svg></button>
      <button class="tool-btn arrow" aria-label="曲线"><svg width="20" height="20"><use href="#i-curve"/></svg></button>
      <button class="tool-btn arrow" aria-label="椭圆"><svg width="20" height="20"><use href="#i-ellipse"/></svg></button>
      <button class="tool-btn arrow" aria-label="多段线"><svg width="20" height="20"><use href="#i-poly"/></svg></button>
      <button class="tool-btn arrow" aria-label="选择"><svg width="20" height="20"><use href="#i-select"/></svg></button>
      <button class="tool-btn arrow" aria-label="标注"><svg width="20" height="20"><use href="#i-dim"/></svg></button>
      <button class="tool-btn arrow" aria-label="修改"><svg width="20" height="20"><use href="#i-modify"/></svg></button>
      <button class="tool-btn arrow" aria-label="信息"><svg width="20" height="20"><use href="#i-info"/></svg></button>
      <button class="tool-btn arrow" aria-label="顺序"><svg width="20" height="20"><use href="#i-order"/></svg></button>
      <div class="side-line"></div>
      <div class="grip-h mb-1"></div>
      <button class="tool-btn" aria-label="多行文字"><svg width="20" height="20" viewBox="0 0 20 20"><g font-family="Liberation Serif, serif" font-size="8" fill="#222"><text x="0" y="9">ABC</text><text x="0" y="17">DEF</text></g><path d="M15 1.500h4M15 18.500h4M17.500 2v16" stroke="#333"/></svg></button>
      <button class="tool-btn" aria-label="填充"><svg width="20" height="20"><use href="#i-hatch"/></svg></button>
      <button class="tool-btn" aria-label="图像"><svg width="20" height="20"><use href="#i-image"/></svg></button>
      <button class="tool-btn" aria-label="创建块"><svg width="20" height="20"><use href="#i-block"/></svg></button>
      <button class="tool-btn" aria-label="点"><svg width="20" height="20"><use href="#i-dot"/></svg></button>
    </aside>

    <section class="view-frame d-flex flex-column flex-fill">
      <div class="d-flex flex-fill" style="min-height:0">
        <div class="drawing flex-fill">
          <svg width="100%" height="100%" shape-rendering="crispEdges">
            <defs>
              <pattern id="minor" width="40" height="40" patternUnits="userSpaceOnUse"><rect x="10" y="38" width="1" height="1" fill="#8a8a8a"/></pattern>
              <pattern id="majorV" x="50" width="400" height="5" patternUnits="userSpaceOnUse"><rect y="3" width="1" height="1" fill="#5c5c5c"/></pattern>
              <pattern id="majorH" y="238" width="5" height="400" patternUnits="userSpaceOnUse"><rect width="1" height="1" fill="#5c5c5c"/></pattern>
            </defs>
            <rect width="100%" height="100%" fill="url(#majorV)"/>
            <rect width="100%" height="100%" fill="url(#majorH)"/>
            <rect width="100%" height="100%" fill="url(#minor)"/>
            <path d="M30 638.500h41M50.500 618v41" stroke="#f00"/>
          </svg>
        </div>
        <div class="v-scroll"><div></div></div>
      </div>
      <div class="h-scroll"><div></div></div>
    </section>

    <aside class="dock-col d-flex flex-column">
      <div class="dock-title d-flex align-items-center">图层树
        <button class="plain-btn ms-auto" aria-label="浮动"><svg width="9" height="9"><use href="#i-float"/></svg></button>
        <button class="plain-btn gap-btn" aria-label="关闭"><svg width="8" height="8"><use href="#i-x"/></svg></button>
      </div>
      <div class="dock-tools">
        <div class="d-flex align-items-center">
          <input class="filter-box" type="text" placeholder="过滤器" aria-label="过滤器">
          <input class="form-check-input mode-check" type="checkbox" id="mode" checked><label for="mode">高亮模式</label>
          <button class="layer-btn ms-auto" aria-label="设置"><svg width="16" height="16"><use href="#i-gear"/></svg></button>
        </div>
        <div class="d-flex button-row">
          <button class="layer-btn" aria-label="显示全部"><svg width="14" height="14"><use href="#i-eye"/></svg></button>
          <button class="layer-btn" aria-label="隐藏全部"><svg width="14" height="14" style="filter:grayscale(1)" opacity=".45"><use href="#i-eye"/></svg></button>
          <button class="layer-btn on" aria-label="标注图层"><svg width="13" height="13"><use href="#i-vdim"/></svg></button>
          <button class="layer-btn" aria-label="选取"><svg width="13" height="13"><use href="#i-pick"/></svg></button>
          <button class="layer-btn" aria-label="展开"><svg width="14" height="14" opacity=".75"><use href="#i-order"/></svg></button>
          <button class="layer-btn" aria-label="收起"><svg width="14" height="14"><use href="#i-top"/></svg></button>
          <button class="layer-btn" aria-label="斜标注"><svg width="14" height="14"><use href="#i-slant"/></svg></button>
          <button class="layer-btn off" aria-label="解锁"><svg width="13" height="13"><use href="#i-lock"/></svg></button>
          <button class="layer-btn" aria-label="锁定"><svg width="13" height="13"><use href="#i-lock"/></svg></button>
        </div>
        <div class="d-flex align-items-center button-row lined">
          <button class="layer-btn" aria-label="添加"><svg width="13" height="13"><use href="#i-plus"/></svg></button>
          <button class="layer-btn" aria-label="添加标注"><svg width="13" height="13"><use href="#i-dim"/></svg></button>
          <button class="layer-btn" aria-label="删除"><svg width="14" height="14"><use href="#i-minus"/></svg></button>
          <button class="layer-btn" aria-label="编辑"><svg width="14" height="14"><use href="#i-rename"/></svg></button>
          <div class="button-line"></div>
          <button class="layer-btn" aria-label="导出"><svg width="14" height="14"><use href="#i-export"/></svg></button>
        </div>
      </div>
      <div class="layer-list">
        <table>
          <tr>
            <td class="node"><svg width="13" height="13"><use href="#i-node"/></svg></td>
            <td><svg width="14" height="14"><use href="#i-eye"/></svg></td>
            <td class="off"><svg width="13" height="13"><use href="#i-lock"/></svg></td>
            <td><svg width="13" height="13"><use href="#i-print"/></svg></td>
            <td><svg width="14" height="14"><use href="#i-hash"/></svg></td>
            <td class="swatch"></td>
            <td class="bare fw-bold">0</td>
          </tr>
        </table>
      </div>
      <nav class="nav dock-tabs flex-nowrap">
        <a class="nav-link" href="#">库浏览器</a>
        <a class="nav-link" href="#">块列表</a>
        <a class="nav-link" href="#">图层列表</a>
        <a class="nav-link" href="#">笔调色板</a>
        <a class="nav-link active" href="#">图层树</a>
      </nav>
      <div class="command-dock d-flex flex-fill" style="min-height:0">
        <div class="command-rail d-flex flex-column align-items-center">
          <button class="plain-btn" aria-label="关闭"><svg width="8" height="8"><use href="#i-x"/></svg></button>
          <button class="plain-btn" aria-label="浮动"><svg width="9" height="9"><use href="#i-float"/></svg></button>
          <span class="rail-text mt-auto">命令</span>
        </div>
        <div class="d-flex flex-column flex-fill" style="min-width:0">
          <textarea class="command-log flex-fill" readonly aria-label="命令历史"></textarea>
          <label class="command-label" for="cmd">命令：</label>
          <div class="d-flex align-items-center mb-1">
            <input class="command-input flex-fill" id="cmd" type="text">
            <button class="plain-btn command-menu" aria-label="命令选项"><svg width="7" height="9"><path d="M0 1h7M0 4.500h7M0 8h7" stroke="#bbb" stroke-width="2"/></svg></button>
          </div>
        </div>
      </div>
    </aside>
  </main>

  <div class="bottom-row d-flex">
    <div class="tool-group">
      <div class="grip"></div>
      <button class="tool-btn ex-label">Ex</button>
      <button class="tool-btn" aria-label="自由捕捉"><svg width="20" height="20"><use href="#i-free"/></svg></button>
      <button class="tool-btn" aria-label="捕捉网格线"><svg width="20" height="20"><use href="#i-snapgrid"/></svg></button>
      <button class="tool-btn" aria-label="捕捉栅格"><svg width="20" height="20"><use href="#i-nodes"/></svg></button>
      <button class="tool-btn" aria-label="捕捉端点"><svg width="20" height="20"><use href="#i-end"/></svg></button>
      <button class="tool-btn" aria-label="捕捉实体"><svg width="20" height="20"><use href="#i-onent"/></svg></button>
      <button class="tool-btn" aria-label="捕捉圆心"><svg width="20" height="20"><use href="#i-center"/></svg></button>
      <button class="tool-btn" aria-label="捕捉中点"><svg width="20" height="20"><use href="#i-mid"/></svg></button>
      <button class="tool-btn" aria-label="捕捉距离"><svg width="20" height="20"><use href="#i-dist"/></svg></button>
      <button class="tool-btn" aria-label="捕捉交点"><svg width="20" height="20"><use href="#i-cross"/></svg></button>
      <div class="tool-gap"></div>
      <button class="tool-btn" aria-label="限制水平"><svg width="20" height="20"><use href="#i-hor"/></svg></button>
      <button class="tool-btn" aria-label="限制垂直"><svg width="20" height="20"><use href="#i-ver"/></svg></button>
      <button class="tool-btn" aria-label="限制正交"><svg width="20" height="20"><use href="#i-ortho"/></svg></button>
      <div class="tool-gap"></div>
      <button class="tool-btn" aria-label="相对零点"><svg width="20" height="20"><use href="#i-relz"/></svg></button>
      <button class="tool-btn" aria-label="锁定相对零点"><svg width="22" height="22"><use href="#i-lockz"/></svg></button>
    </div>
    <div class="tool-group">
      <div class="grip"></div>
      <button class="tool-btn" aria-label="左侧停靠"><svg width="20" height="20"><use href="#i-dl"/></svg></button>
      <button class="tool-btn on" aria-label="右侧停靠"><svg width="20" height="20"><use href="#i-dr"/></svg></button>
      <button class="tool-btn" aria-label="顶部停靠"><svg width="20" height="20"><use href="#i-dt"/></svg></button>
      <button class="tool-btn" aria-label="底部停靠"><svg width="20" height="20"><use href="#i-db"/></svg></button>
      <button class="tool-btn" aria-label="浮动停靠"><svg width="20" height="20"><use href="#i-df"/></svg></button>
    </div>
    <div class="tool-group last">
      <div class="grip"></div>
      <button class="tool-btn" aria-label="菜单创建器"><svg width="20" height="20"><use href="#i-addmenu"/></svg></button>
      <button class="tool-btn" aria-label="工具栏创建器"><svg width="20" height="20"><use href="#i-addtool"/></svg></button>
    </div>
  </div>

  <footer class="status-strip d-flex">
    <div class="status-cell dark w-coord"><div>241.2500 , 159.5000</div><div>289.2089 &lt; 33.4703°</div></div>
    <div class="status-cell w-coord"><div>@  241.2500 , 159.5000</div><div>@  289.2089 &lt; 33.4703°</div></div>
    <div class="status-cell w-mouse d-flex justify-content-center align-items-end pb-0"><svg width="52" height="56" viewBox="0 0 52 56"><path d="M1 15c5 3 11 8 14 0s4-13 12-13c7 0 9 5 9 9" fill="none" stroke="#000" stroke-width="2"/><rect x="20" y="12" width="30" height="42" rx="5" fill="#fff" stroke="#000" stroke-width="2"/><path d="M30 12h11v16H30z" fill="#00ff7f" stroke="#000" stroke-width="2"/><path d="M20 28h30" stroke="#000" stroke-width="2"/></svg></div>
    <div class="status-cell tight w-sel d-flex"><div class="w-half"><div>已选择</div><div>0</div></div><div><div>总长度</div><div>0</div></div></div>
    <div class="status-cell w-layer"><div>当前图层</div><div>0</div></div>
    <div class="status-cell w-grid"><div>网格状态</div><div>10 / 100</div></div>
    <svg class="ms-auto mt-auto" width="12" height="12"><path d="M1 10h2M4 10h2M7 10h2M4 7h2M7 7h2M7 4h2" stroke="#b8b8b8" stroke-width="2"/></svg>
  </footer>
</div>
</body>
</html>
